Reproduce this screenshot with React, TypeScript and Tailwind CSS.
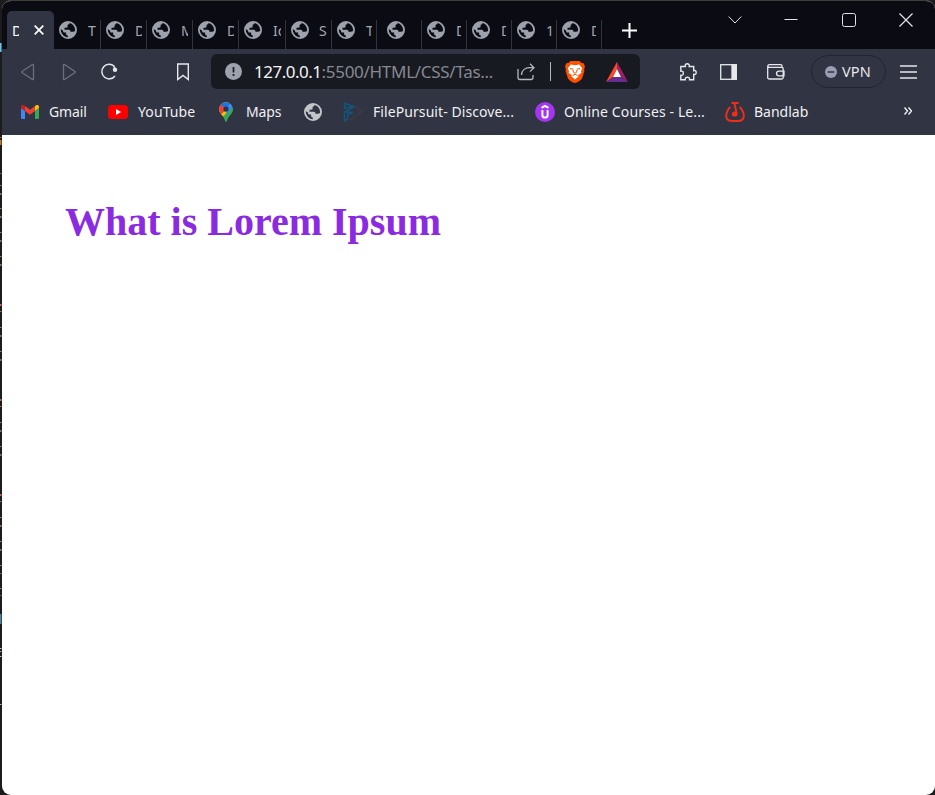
import React from "react";

const tabs = [
  { title: "T", w: "w-[47px]", pad: "pl-[5px]", gap: "ml-[11px]", clip: "w-[8px]" },
  { title: "D", w: "w-[46px]", pad: "pl-[5px]", gap: "ml-[11px]", clip: "w-[7px]" },
  { title: "M", w: "w-[46px]", pad: "pl-[5px]", gap: "ml-[11px]", clip: "w-[7px]" },
  { title: "D", w: "w-[46px]", pad: "pl-[5px]", gap: "ml-[11px]", clip: "w-[7px]" },
  { title: "Ic", w: "w-[47px]", pad: "pl-[5px]", gap: "ml-[11px]", clip: "w-[8px]" },
  { title: "S", w: "w-[46px]", pad: "pl-[5px]", gap: "ml-[10px]", clip: "w-[8px]" },
  { title: "T", w: "w-[45px]", pad: "pl-[5px]", gap: "ml-[11px]", clip: "w-[6px]" },
  { title: "", w: "w-[45px]", pad: "pl-[10px]", gap: "ml-[10px]", clip: "w-[5px]" },
  { title: "D", w: "w-[45px]", pad: "pl-[5px]", gap: "ml-[11px]", clip: "w-[5px]" },
  { title: "D", w: "w-[45px]", pad: "pl-[5px]", gap: "ml-[11px]", clip: "w-[5px]" },
  { title: "1", w: "w-[45px]", pad: "pl-[5px]", gap: "ml-[11px]", clip: "w-[6px]" },
  { title: "D", w: "w-[45px]", pad: "pl-[5px]", gap: "ml-[11px]", clip: "w-[5px]" },
];

function Globe({ className }: { className: string }) {
  return (
    <svg viewBox="0 0 18 18" className={`h-[18px] w-[18px] shrink-0 ${className}`} fill="currentColor">
      <path
        fillRule="evenodd"
        d="M9 0a9 9 0 1 0 0 18A9 9 0 0 0 9 0ZM10.600 2c-.2 1.200-1 1.500-2 1.700v1.800c0 .8-.6 1.200-1.500 1.200H5.500v2h4.200c1.400 0 1.700.8 1.700 2h2.200c1 0 1.600-.5 2.500-.8A7.200 7.200 0 0 0 10.600 2ZM1.800 8.500c0 4 3 7.300 7 7.700v-1.800c-1.200 0-1.700-.6-1.700-1.600v-1.300H5.500c-1 0-1.200-.5-1.500-1.500-.3-1-1-1.500-2.200-1.500Z"
      />
    </svg>
  );
}

const stroke = { fill: "none", stroke: "currentColor" } as const;

function Gmail() {
  return (
    <svg className="h-[14px] w-[18px]" viewBox="0 0 18 14">
      <path fill="#4285f4" d="M0 3l4 3v8H1.200A1.200 1.200 0 0 1 0 12.800Z" />
      <path fill="#34a853" d="M14 6l4-3v9.800a1.200 1.200 0 0 1-1.200 1.200H14Z" />
      <path fill="#ea4335" d="M4 1l5 3.700L14 1v5L9 9.700 4 6Z" />
      <path fill="#c5221f" d="M0 2C0 .2 1.800-.4 3.200.4L4 1v5L0 3Z" />
      <path fill="#fbbc04" d="M18 2c0-1.800-1.800-2.400-3.200-1.600L14 1v5l4-3Z" />
    </svg>
  );
}

function YouTube() {
  return (
    <svg className="h-[14px] w-[20px]" viewBox="0 0 20 14">
      <rect width="20" height="14" rx="3.500" fill="#f00" />
      <path d="M8 4l5.200 3L8 10Z" fill="#fff" />
    </svg>
  );
}

function MapPin() {
  return (
    <svg className="h-5 w-4" viewBox="0 0 16 20">
      <defs>
        <clipPath id="pin">
          <path d="M8 .3A6.900 6.900 0 0 0 1.100 7c0 2.500 1.200 4 3 6.200C5.500 15 6.800 16.600 7.300 19c.2.900 1.200.9 1.400 0 .5-2.400 1.800-4 3.200-5.800 1.800-2.200 3-3.700 3-6.200A6.900 6.900 0 0 0 8 .3Z" />
        </clipPath>
      </defs>
      <g clipPath="url(#pin)">
        <path fill="#34a853" d="M0 0h16v20H0Z" />
        <path fill="#fbbc04" d="M0 12.500 12 0H0v16l4 .1 7-8Z" />
        <path fill="#ea4335" d="M0 0h4l4 7-5.500 6L0 11Z" />
        <path fill="#1a73e8" d="M2 2l6 5 5-7H3Z" />
        <path fill="#4285f4" d="M8 7l4.500-6L16 5l-2 1-6 7Z" />
        <path fill="#34a853" d="M16 5l-5 5-6 6 2 4h9Z" />
      </g>
      <circle cx="8" cy="7" r="2.600" fill="#303443" />
    </svg>
  );
}

function FilePursuit() {
  return (
    <svg className="h-5 w-5" viewBox="0 0 20 20" fill="none">
      <path d="M1.500 1v5l9-1.500L1.500 1M1.500 10v9l3-2v-4l5.500-2.500-8.500-.5 9-5" stroke="#13557a" strokeWidth="1.500" />
      <path d="M12 4l7 5.500L7 18" stroke="#3d3e47" strokeWidth="1.300" />
    </svg>
  );
}

function Udemy() {
  return (
    <svg className="h-5 w-5" viewBox="0 0 20 20" fill="none">
      <circle cx="10" cy="10" r="10" fill="#a435f0" />
      <path d="M6.500 5.800 10 3.800l3.500 2M7.400 8v5.200c0 3.200 5.200 3.200 5.200 0V8" stroke="#fff" strokeWidth="2" />
    </svg>
  );
}

function Bandlab() {
  return (
    <svg className="h-5 w-5" viewBox="0 0 20 20" fill="none" stroke="#f12c18">
      <path d="M5.200 4.800C3 7.500 1.200 10 1.200 13.500c0 4 2.500 5.400 5.300 5.400h7c2.800 0 5.300-1.400 5.300-5.400 0-3.500-1.800-6-4-8.700" strokeWidth="2" />
      <path d="M6.500 1H13.500M9.300 1l2.500 11" strokeWidth="2" />
      <ellipse cx="9.700" cy="12" rx="2.800" ry="2.600" fill="#f12c18" stroke="none" />
    </svg>
  );
}

const bookmarks = [
  { label: "Gmail", icon: <Gmail />, w: "w-[87px]", iconW: "w-[28px]", track: "tracking-[-0.1px]" },
  { label: "YouTube", icon: <YouTube />, w: "w-[110px]", iconW: "w-[30px]", track: "tracking-[0.1px]" },
  { label: "Maps", icon: <MapPin />, w: "w-[86px]", iconW: "w-[28px]", track: "tracking-[-0.1px]" },
  { label: "", icon: <Globe className="text-[#c3c5c9]" />, w: "w-[39px]", iconW: "w-[18px]", track: "" },
  { label: "FilePursuit- Discove...", icon: <FilePursuit />, w: "w-[192px]", iconW: "w-[30px]", track: "tracking-[0.08px]" },
  { label: "Online Courses - Le...", icon: <Udemy />, w: "w-[190px]", iconW: "w-[29px]", track: "tracking-[0.12px]" },
  { label: "Bandlab", icon: <Bandlab />, w: "w-[90px]", iconW: "w-[29px]", track: "tracking-[0px]" },
];

function TabStrip() {
  return (
    <div className="flex h-12 bg-[#0b0b14] pl-[5px]">
      <div className="mt-[10px] flex h-[38px] w-[47px] items-center rounded-t-[5px] bg-[#303443] pl-[5px]">
        <span className="w-[7px] overflow-hidden text-[14px] text-white">D</span>
        <svg className="ml-[15px] h-[10px] w-[10px] shrink-0 text-white" viewBox="0 0 10 10" {...stroke} strokeWidth="1.700">
          <path d="M.7.7l8.600 8.600M9.300.7.7 9.300" />
        </svg>
      </div>
      <div className="mt-[19px] flex h-[29px]">
        {tabs.map((t, i) => (
          <div key={i} className={`flex border-r border-[#34353a] pb-2 ${t.w} ${t.pad}`}>
            <Globe className="mt-[1px] text-[#9ca1ab]" />
            <span className={`h-[21px] shrink-0 overflow-hidden text-[14px] leading-[21px] text-[#a5a8b0] ${t.gap} ${t.clip}`}>{t.title}</span>
          </div>
        ))}
      </div>
      <svg className="ml-[20px] mt-[22px] h-[15px] w-[15px] text-white" viewBox="0 0 15 15" {...stroke} strokeWidth="2">
        <path d="M7.500 0v15M0 7.500h15" />
      </svg>
      <div className="ml-auto flex pr-[22px] pt-[12px] text-[#e4e4e6]">
        <svg className="mr-[42px] h-[14px] w-[14px]" viewBox="0 0 14 14" {...stroke}><path d="M.7 3.500 7 10l6.300-6.500" /></svg>
        <svg className="mr-[44px] h-[14px] w-[14px]" viewBox="0 0 14 14" {...stroke}><path d="M.5 6.500h13" /></svg>
        <svg className="mr-[43px] h-[14px] w-[14px]" viewBox="0 0 14 14" {...stroke}><rect x=".5" y=".5" width="13" height="13" rx="2" /></svg>
        <svg className="h-[14px] w-[14px]" viewBox="0 0 14 14" {...stroke} strokeWidth="1.200"><path d="M.5.5l13 13M13.500.5l-13 13" /></svg>
      </div>
    </div>
  );
}

function BraveLion() {
  return (
    <svg className="ml-[14px] h-[22px] w-5" viewBox="0 0 20 22">
      <path fill="#ff5000" d="M5.500 0h9l2 2 2.200.2L20 5.500l-.8 2.500.2 2-2.400 7.500c-.6 1.500-5 4.500-7 4.500s-6.400-3-7-4.500L.6 10l.2-2L0 5.500l1.300-3.300L3.500 2Z" />
      <path fill="#fff" d="M5.800 3.500 10 4.200l4.200-.7 3 3.700-1.200 3.200.4 1.600-3.100 2 .1 1.500-3.400 3-3.400-3 .1-1.500-3.100-2L4 10.400 2.800 7.200Z" />
      <path fill="none" stroke="#ff5000" strokeWidth="1" d="M5 7.500l3 .6M15 7.500l-3 .6M8 8.500l.3 2.700 1.700 1 1.700-1 .3-2.700M7.500 14.500l2.500-1.200 2.500 1.200" />
    </svg>
  );
}

function Toolbar() {
  return (
    <div className="flex h-[45px] items-center pl-[19px] text-[#e8e8ea]">
      <svg className="h-[18px] w-[14px] text-[#6c6f7d]" viewBox="0 0 14 18" {...stroke} strokeWidth="1.300"><path d="M12.500 2v14c0 .7-.5.9-1 .5L1 9.500q-.6-.5 0-1l10.500-7c.5-.4 1-.2 1 .5Z" /></svg>
      <svg className="ml-[27px] h-[18px] w-[14px] text-[#6c6f7d]" viewBox="0 0 14 18" {...stroke} strokeWidth="1.300"><path d="M1.500 2v14c0 .7.500.9 1 .5l10.500-7q.6-.5 0-1l-10.500-7c-.5-.4-1-.2-1 .5Z" /></svg>
      <svg className="ml-[24px] h-[18px] w-[18px]" viewBox="0 0 18 18" {...stroke} strokeWidth="1.500">
        <path d="M14.200 3.300A7.300 7.300 0 1 0 15 13" />
        <circle cx="15" cy="6.700" r="2.200" fill="currentColor" stroke="none" />
        <path d="M13.800 3l1.200 3" />
      </svg>
      <svg className="ml-[58px] h-[18px] w-[14px]" viewBox="0 0 14 18" {...stroke} strokeWidth="1.400"><path d="M1.700 1h10.600v15.500L7 12.500l-5.300 4Z" /></svg>
      <div className="ml-[21px] flex h-[35px] w-[429px] items-center rounded-[6px] bg-[#181a21] pl-[14px]">
        <svg className="h-[17px] w-[17px]" viewBox="0 0 17 17"><circle cx="8.500" cy="8.500" r="8.500" fill="#9ca1ab" /><path d="M8.500 4v5.500M8.500 11v2" stroke="#181a21" strokeWidth="1.700" /></svg>
        <div className="ml-[12px] w-[263px] whitespace-nowrap text-[17px] tracking-[-0.29px] text-[#868991]">
          <span className="tracking-[-0.5px] text-[#f4f4f6]">127.0.0.1</span>:5500/HTML/CSS/Tas...
        </div>
        <svg className="h-[18px] w-[18px] text-[#b6b7bb]" viewBox="0 0 18 18" {...stroke} strokeWidth="1.300"><path d="M1 6v8.500c0 1.500.500 2 2 2h11c1.500 0 2-.5 2-2V12M4.500 12c.3-5 4-7.300 8-7.300h4M13 .8l4 3.900-4 3.900" /></svg>
        <i className="ml-[15px] h-[19px] w-px bg-[#b6b7bb]" />
        <BraveLion />
        <svg className="ml-[21px] h-5 w-[22px]" viewBox="0 0 22 20"><path fill="#ff4724" d="M11 0v7l-4 8L0 20Z" /><path fill="#9e1f63" d="M11 0l11 20-7-5-4-8Z" /><path fill="#662d91" d="M0 20h22l-7-5H7Z" /><path fill="#fff" d="M11 7l4 8H7Z" /></svg>
      </div>
      <svg className="ml-[39px] h-[18px] w-[18px]" viewBox="0 0 18 18" {...stroke} strokeWidth="1.400"><path d="M1.800 3.500h4.500C5.500 1.500 7 .8 8.200.8s2.700.7 2 2.700h4.500v4.200c2-.6 2.500.7 2.500 1.800s-.5 2.400-2.500 1.800v5.500h-4.200c.5-2-.9-2.500-2.100-2.500s-2.600.5-2.100 2.500H1.800v-4.500c2 .5 2.500-.9 2.500-2.100s-.5-2.500-2.500-2Z" /></svg>
      <svg className="ml-[23px] h-4 w-[17px]" viewBox="0 0 17 16" {...stroke} strokeWidth="1.300"><rect x=".7" y=".7" width="15.600" height="14.600" /><path d="M12 1h4v14h-4Z" fill="currentColor" /></svg>
      <svg className="ml-[30px] h-4 w-[18px]" viewBox="0 0 18 16" {...stroke} strokeWidth="1.300"><path d="M15 3V2c0-1-.5-1.300-1.300-1.300H2.500C.3.700.3 3.300 2.500 3.300h12.200c1 0 1.500.5 1.500 1.500v8.700c0 1-.5 1.500-1.500 1.500H2.500C1.300 15 .7 14.500.7 13.500V2.300M17 7.200h-5c-3.300 0-3.300 4.600 0 4.600h5Z" /></svg>
      <div className="ml-[26px] flex h-[33px] w-[75px] items-center rounded-full border border-[#202432] pl-[13px]">
        <svg className="h-3 w-3" viewBox="0 0 12 12"><circle cx="6" cy="6" r="6" fill="#9a9cb3" /><path d="M2.700 6h6.600" stroke="#303443" strokeWidth="1.500" /></svg>
        <span className="ml-[5px] text-[14.500px] tracking-[0.1px]">VPN</span>
      </div>
      <svg className="ml-[14px] h-[14px] w-[17px]" viewBox="0 0 17 14" {...stroke} strokeWidth="1.300"><path d="M0 1h17M0 7h17M0 13h17" /></svg>
    </div>
  );
}

// Slivers of the editor window showing behind the browser's left edge: [top, height, colour]
const slivers: [number, number, string][] = [
  [43, 9, "#6cc5e8"], [137, 1, "#a06a4a"], [140, 5, "#c87828"], [173, 1, "#55706c"],
  [185, 1, "#a08070"], [193, 2, "#8a7060"], [208, 1, "#a08070"], [216, 2, "#8a7060"],
  [232, 1, "#a08070"], [240, 2, "#8a7060"], [256, 1, "#a08070"], [264, 2, "#8a7060"],
  [304, 2, "#c06858"], [311, 1, "#a07860"], [327, 1, "#a08070"], [335, 2, "#8a7060"],
  [351, 1, "#a08070"], [359, 2, "#8a7060"], [399, 2, "#c06858"], [406, 1, "#a07860"],
  [422, 1, "#a08070"], [430, 2, "#8a7060"], [446, 1, "#a08070"], [454, 2, "#8a7060"],
  [494, 2, "#c06858"], [501, 1, "#a07860"], [517, 1, "#a08070"], [525, 2, "#8a7060"],
  [541, 1, "#a08070"], [549, 2, "#8a7060"], [565, 1, "#a08070"], [573, 1, "#8a7060"],
  [588, 1, "#a08070"], [595, 1, "#6a6060"], [614, 10, "#4f8296"], [648, 1, "#c0c0c0"],
  [651, 1, "#c09090"], [656, 1, "#c0c0c0"], [704, 1, "#b0b0b0"],
];

function Backdrop() {
  return (
    <svg className="h-[795px] w-[2px] shrink-0" viewBox="0 0 2 795">
      {slivers.map(([y, h, color]) => (
        <rect key={y} y={y} width="1.500" height={h} fill={color} />
      ))}
    </svg>
  );
}

export default function App() {
  return (
    <div className="flex h-[795px] w-[935px] overflow-hidden bg-[#1c1c1c] font-['Noto_Sans',sans-serif]">
      <Backdrop />
      <div className="flex h-[795px] w-[933px] flex-col overflow-hidden rounded-[9px] border-t border-[#3e3e3e] bg-white">
        <TabStrip />
        <div className="h-[86px] shrink-0 bg-[#303443]">
          <Toolbar />
          <div className="flex h-[36px] items-center pl-[19px] text-[14px] text-[#f0f0f2]">
            {bookmarks.map((b, i) => (
              <div key={i} className={`flex shrink-0 items-center ${b.w}`}>
                <div className={`shrink-0 ${b.iconW}`}>{b.icon}</div>
                <span className={`-mt-[2px] whitespace-nowrap ${b.track}`}>{b.label}</span>
              </div>
            ))}
            <svg className="-mt-[2px] ml-[89px] h-2 w-2" viewBox="0 0 8 8" {...stroke} strokeWidth="1.400"><path d="M.5.500 3.500 4l-3 3.500M4.500.500l3 3.500-3 3.500" /></svg>
          </div>
        </div>
        <main className="px-[63px] pt-[64px]">
          <h1 className="whitespace-nowrap font-['Liberation_Serif',serif] text-[40px] font-bold leading-[46px] text-[#8a2be2]">What is Lorem Ipsum</h1>
        </main>
      </div>
    </div>
  );
}
